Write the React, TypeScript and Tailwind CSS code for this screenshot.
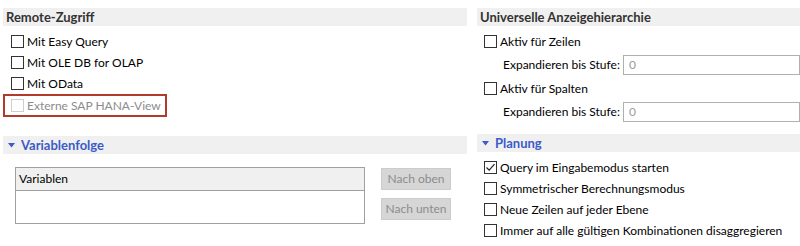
import React from "react";

function Box({ checked = false, disabled = false }: { checked?: boolean; disabled?: boolean }) {
  return (
    <span
      className={
        "relative inline-flex h-[13px] w-[13px] shrink-0 items-center justify-center border bg-white " +
        (disabled ? "border-[#cfcfcf]" : "border-[#333333]")
      }
    >
      {checked && (
        <svg width="11" height="11" viewBox="0 0 11 11" className="absolute left-[0px] top-[0px]">
          <path d="M1.5 5.5 L4.2 8.2 L9.5 2.2" fill="none" stroke="#222" strokeWidth="1.2" />
        </svg>
      )}
    </span>
  );
}

function Check({ label, checked = false, disabled = false }: { label: string; checked?: boolean; disabled?: boolean }) {
  return (
    <div className="flex h-[21px] items-center gap-[3px] whitespace-nowrap">
      <Box checked={checked} disabled={disabled} />
      <span className={disabled ? "text-[#8c8c8c]" : "text-[#000000]"}>{label}</span>
    </div>
  );
}

function Header({ title, expandable = false }: { title: string; expandable?: boolean }) {
  return (
    <div className="flex h-[18px] items-center whitespace-nowrap bg-[#f0f0f0] pl-[3px] text-[13px]">
      {expandable ? (
        <>
          <svg width="7" height="5" viewBox="0 0 7 5" className="ml-[2px] mr-[6px]">
            <path d="M0 0 L7 0 L3.5 4.5 Z" fill="#3b5bc8" />
          </svg>
          <span className="font-bold text-[#3b5bc8]">{title}</span>
        </>
      ) : (
        <span className="font-bold text-[#333333]">{title}</span>
      )}
    </div>
  );
}

function Expand() {
  return (
    <div className="flex h-[26px] items-center whitespace-nowrap pl-[26px]">
      <span className="w-[120px] shrink-0 text-[#000000]">Expandieren bis Stufe:</span>
      <div className="flex h-[20px] flex-1 items-center border border-[#b0b0b0] pl-[5px] text-[#9a9a9a]">0</div>
    </div>
  );
}

export default function App() {
  return (
    <div
      className="flex h-[246px] w-[800px] overflow-hidden bg-white pt-[8px] text-[12px] leading-none"
      style={{ fontFamily: 'Lato, "Noto Sans", sans-serif' }}
    >
      <div className="ml-[3px] flex w-[464px] shrink-0 flex-col">
        <Header title="Remote-Zugriff" />
        <div className="mt-[5px] flex flex-col pl-[8px]">
          <Check label="Mit Easy Query" />
          <Check label="Mit OLE DB for OLAP" />
          <Check label="Mit OData" />
        </div>
        <div className="flex h-[23px] w-[164px] items-center border-2 border-[#b23a2a] pl-[6px]">
          <div className="flex items-center gap-[3px] whitespace-nowrap">
            <Box disabled />
            <span className="text-[#8c8c8c]">Externe SAP HANA-View</span>
          </div>
        </div>
        <div className="mt-[19px]">
          <Header title="Variablenfolge" expandable />
        </div>
        <div className="mt-[13px] ml-[12px] flex gap-[16px]">
          <div className="flex h-[57px] w-[350px] flex-col border border-[#a0a0a0]">
            <div className="flex h-[23px] items-center border-b border-[#a0a0a0] bg-[#f0f0f0] pl-[3px] text-[#000000]">
              Variablen
            </div>
          </div>
          <div className="mt-[1px] flex flex-col gap-[8px] whitespace-nowrap">
            <div className="flex h-[22px] w-[70px] items-center justify-center border border-[#cccccc] bg-[#d6d6d6] text-[#8c8c8c]">
              Nach oben
            </div>
            <div className="flex h-[22px] w-[70px] items-center justify-center border border-[#cccccc] bg-[#d6d6d6] text-[#8c8c8c]">
              Nach unten
            </div>
          </div>
        </div>
      </div>
      <div className="ml-[10px] flex min-w-0 flex-1 flex-col">
        <Header title="Universelle Anzeigehierarchie" />
        <div className="mt-[5px] flex flex-col pl-[7px]">
          <Check label="Aktiv für Zeilen" />
        </div>
        <Expand />
        <div className="flex flex-col pl-[7px]">
          <Check label="Aktiv für Spalten" />
        </div>
        <Expand />
        <div className="mt-[9px]">
          <Header title="Planung" expandable />
        </div>
        <div className="mt-[5px] flex flex-col pl-[7px]">
          <Check label="Query im Eingabemodus starten" checked />
          <Check label="Symmetrischer Berechnungsmodus" />
          <Check label="Neue Zeilen auf jeder Ebene" />
          <Check label="Immer auf alle gültigen Kombinationen disaggregieren" />
        </div>
      </div>
    </div>
  );
}
